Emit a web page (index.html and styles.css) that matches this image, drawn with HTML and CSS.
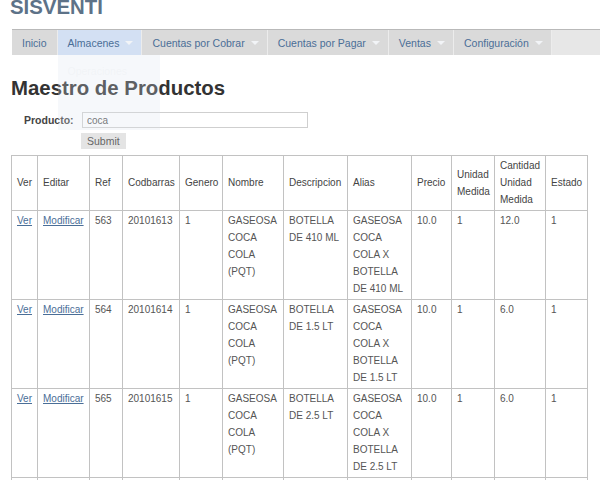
FILE: index.html
```html
<!DOCTYPE html>
<html lang="es">
<head>
    <meta charset="UTF-8">
    <title>SISVENTI - Maestro de Productos</title>
    <link rel="stylesheet" href="styles.css">
</head>
<body>

<div class="header">
    <h1 class="brand">SISVENTI</h1>
</div>

<div class="nav-wrap">
    <ul class="nav">
        <li><a href="#">Inicio</a></li>
        <li class="active has-sub">
            <a href="#">Almacenes</a>
            <ul class="submenu">
                <li><a href="#">Operaciones</a></li>
            </ul>
        </li>
        <li class="has-sub"><a href="#">Cuentas por Cobrar</a></li>
        <li class="has-sub"><a href="#">Cuentas por Pagar</a></li>
        <li class="has-sub"><a href="#">Ventas</a></li>
        <li class="has-sub"><a href="#">Configuración</a></li>
    </ul>
</div>

<div class="content">
    <h2 class="title">Maestro de Productos</h2>

    <form class="search">
        <label for="producto">Producto:</label>
        <input type="text" id="producto" value="coca">
        <span></span>
        <button type="submit">Submit</button>
    </form>

    <!-- listado de productos -->
    <table class="grid">
        <colgroup>
            <col class="c-ver">
            <col class="c-editar">
            <col class="c-ref">
            <col class="c-cod">
            <col class="c-gen">
            <col class="c-nom">
            <col class="c-desc">
            <col class="c-alias">
            <col class="c-precio">
            <col class="c-um">
            <col class="c-cum">
            <col class="c-estado">
        </colgroup>
        <thead>
            <tr>
                <th>Ver</th>
                <th>Editar</th>
                <th>Ref</th>
                <th>Codbarras</th>
                <th>Genero</th>
                <th>Nombre</th>
                <th>Descripcion</th>
                <th>Alias</th>
                <th>Precio</th>
                <th>Unidad Medida</th>
                <th>Cantidad Unidad Medida</th>
                <th>Estado</th>
            </tr>
        </thead>
        <tbody>
            <tr>
                <td><a href="#">Ver</a></td>
                <td><a href="#">Modificar</a></td>
                <td>563</td>
                <td>20101613</td>
                <td>1</td>
                <td>GASEOSA COCA COLA (PQT)</td>
                <td>BOTELLA DE 410 ML</td>
                <td>GASEOSA COCA COLA X BOTELLA DE 410 ML</td>
                <td>10.0</td>
                <td>1</td>
                <td>12.0</td>
                <td>1</td>
            </tr>
            <tr>
                <td><a href="#">Ver</a></td>
                <td><a href="#">Modificar</a></td>
                <td>564</td>
                <td>20101614</td>
                <td>1</td>
                <td>GASEOSA COCA COLA (PQT)</td>
                <td>BOTELLA DE 1.5 LT</td>
                <td>GASEOSA COCA COLA X BOTELLA DE 1.5 LT</td>
                <td>10.0</td>
                <td>1</td>
                <td>6.0</td>
                <td>1</td>
            </tr>
            <tr>
                <td><a href="#">Ver</a></td>
                <td><a href="#">Modificar</a></td>
                <td>565</td>
                <td>20101615</td>
                <td>1</td>
                <td>GASEOSA COCA COLA (PQT)</td>
                <td>BOTELLA DE 2.5 LT</td>
                <td>GASEOSA COCA COLA X BOTELLA DE 2.5 LT</td>
                <td>10.0</td>
                <td>1</td>
                <td>6.0</td>
                <td>1</td>
            </tr>
            <tr>
                <td><a href="#">Ver</a></td>
                <td><a href="#">Modificar</a></td>
                <td>566</td>
                <td>20101616</td>
                <td>1</td>
                <td>GASEOSA COCA COLA (PQT)</td>
                <td>BOTELLA DE 3 LT</td>
                <td>GASEOSA COCA COLA X BOTELLA DE 3 LT</td>
                <td>10.0</td>
                <td>1</td>
                <td>4.0</td>
                <td>1</td>
            </tr>
        </tbody>
    </table>
</div>

</body>
</html>
```
FILE: styles.css
```css
body {
    font-family: "Liberation Sans", Arial, sans-serif;
    margin: 0;
    padding: 0;
    background-color: #fff;
    color: #555;
    overflow: hidden;
}
.header {
    display: flow-root;
    padding: 0 10px;
    height: 29px;
}
.brand {
    margin: -4px 0 0 0;
    font-size: 20.4px;
    line-height: 23px;
    font-weight: bold;
    color: #5d7288;
}

/* menu */
.nav-wrap {
    padding-left: 12px;
}
.nav {
    list-style: none;
    margin: 0;
    padding: 0;
    display: flex;
    background-color: #e7e7e7;
    border-top: 1px solid #b9b9b9;
    height: 25px;
}
.nav > li {
    position: relative;
    display: flex;
    align-items: center;
    background-color: #dadada;
    border-right: 1px solid #ececec;
    padding: 0 10px;
}
.nav > li.active {
    background-color: #d3e0f3;
}
.nav a {
    color: #4a6e97;
    text-decoration: none;
    font-size: 10.5px;
}
.nav > li.has-sub::after {
    content: "";
    margin-left: 6px;
    margin-right: -2px;
    border-left: 4px solid transparent;
    border-right: 4px solid transparent;
    border-top: 4px solid #f2f4f7;
}
.submenu {
    list-style: none;
    position: absolute;
    top: 25px;
    left: 0;
    width: 102px;
    height: 75px;
    margin: 0;
    padding: 6px 10px;
    box-sizing: border-box;
    background-color: #dfe7f2;
    opacity: 0.25;
    z-index: 10;
}
.submenu a {
    color: #c9d3e0;
    font-size: 10.5px;
}

/* contenido */
.content {
    padding: 0 11px;
}
.title {
    margin: 22px 0 12px 0;
    font-size: 20.4px;
    line-height: 23px;
    font-weight: bold;
    color: #333;
}
.search {
    display: grid;
    grid-template-columns: 58px 226px;
    row-gap: 5px;
    padding-left: 13px;
    align-items: center;
}
.search label {
    font-size: 10.5px;
    font-weight: bold;
    color: #444;
}
.search input {
    height: 16px;
    box-sizing: border-box;
    border: 1px solid #cfcfcf;
    padding: 0 4px;
    font-family: inherit;
    font-size: 10px;
    color: #555;
}
.search button {
    justify-self: start;
    margin-left: -1px;
    height: 16px;
    padding: 0 6px;
    border: none;
    background-color: #e4e4e4;
    font-family: inherit;
    font-size: 10.5px;
    color: #666;
}

/* tabla */
.grid {
    margin-top: 6px;
    border-collapse: collapse;
    table-layout: fixed;
    width: 576px;
    font-size: 10px;
    line-height: 17.2px;
}
.grid th, .grid td {
    border: 1px solid #c2c2c2;
    padding: 1px 5px;
    text-align: left;
    overflow: hidden;
}
.grid th {
    font-weight: normal;
    color: #444;
    vertical-align: middle;
}
.grid td {
    vertical-align: top;
}
.grid td a {
    color: #4a6e97;
    text-decoration: underline;
}
.c-ver { width: 26px; }
.c-editar { width: 52px; }
.c-ref { width: 33px; }
.c-cod { width: 57px; }
.c-gen { width: 43px; }
.c-nom { width: 61px; }
.c-desc { width: 64px; }
.c-alias { width: 64px; }
.c-precio { width: 40px; }
.c-um { width: 43px; }
.c-cum { width: 51px; }
.c-estado { width: 42px; }
```
